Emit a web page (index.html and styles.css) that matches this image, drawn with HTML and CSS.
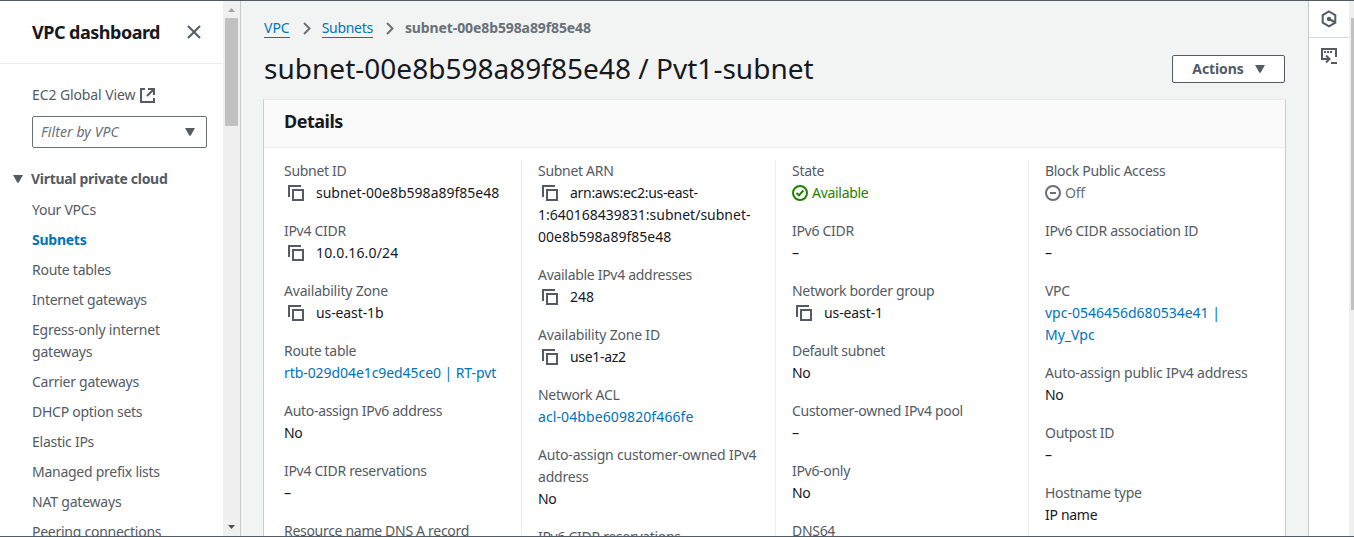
FILE: index.html
```html
<!DOCTYPE html>
<html lang="en">
<head>
<meta charset="utf-8">
<title>Subnet details | VPC</title>
<link rel="stylesheet" href="styles.css">
</head>
<body>
<svg class="defs" width="0" height="0">
  <symbol id="copy" viewBox="0 0 16 16"><path d="M1 12V1h12M5 5h10v10H5z" fill="none" stroke="currentColor" stroke-width="2"/></symbol>
  <symbol id="down" viewBox="0 0 10 8"><path d="M0 0h10L5.9 7.3a1 1 0 0 1-1.8 0z" fill="currentColor"/></symbol>
  <symbol id="chev" viewBox="0 0 8 13"><path d="M1 1l5.5 5.5L1 12" fill="none" stroke="#687078" stroke-width="2"/></symbol>
</svg>
<div class="app">
  <nav class="side">
    <div class="side-head"><h2>VPC dashboard</h2>
      <svg width="14" height="14" viewBox="0 0 14 14"><path d="M1 1l12 12M13 1L1 13" fill="none" stroke="#545b64" stroke-width="2"/></svg>
    </div>
    <a class="global"><span>EC2 Global View</span>
      <svg width="15" height="15" viewBox="0 0 15 15"><path d="M5 1H1v13h13v-4M8 1h6v6M13.500 1.500L7 8" fill="none" stroke="#545b64" stroke-width="2"/></svg>
    </a>
    <div class="select"><i>Filter by VPC</i><svg width="10" height="8"><use href="#down"/></svg></div>
    <div class="section"><svg width="10" height="8"><use href="#down"/></svg><b>Virtual private cloud</b></div>
    <ul class="links">
      <li>Your VPCs</li>
      <li class="active">Subnets</li>
      <li>Route tables</li>
      <li>Internet gateways</li>
      <li class="loose">Egress-only internet<br>gateways</li>
      <li>Carrier gateways</li>
      <li>DHCP option sets</li>
      <li>Elastic IPs</li>
      <li>Managed prefix lists</li>
      <li class="loose">NAT gateways</li>
      <li>Peering connections</li>
    </ul>
  </nav>
  <div class="scroll">
    <svg width="7" height="4" viewBox="0 0 7 4"><path d="M0 4L3.5 0 7 4z" fill="#a3a3a3"/></svg>
    <div class="thumb"></div>
    <svg class="end" width="7" height="4" viewBox="0 0 7 4"><path d="M0 0h7L3.5 4z" fill="#505050"/></svg>
  </div>
  <main class="main">
    <div class="crumbs">
      <a class="c1">VPC</a><svg width="8" height="13"><use href="#chev"/></svg>
      <a class="c2">Subnets</a><svg width="8" height="13"><use href="#chev"/></svg>
      <b>subnet-00e8b598a89f85e48</b>
    </div>
    <div class="title"><h1>subnet-00e8b598a89f85e48 / Pvt1-subnet</h1>
      <button class="btn"><span>Actions</span><svg width="10" height="8"><use href="#down"/></svg></button>
    </div>
    <section class="card">
      <header><h2>Details</h2></header>
      <div class="grid">
        <dl>
          <dt>Subnet ID</dt><dd class="id"><svg class="copy"><use href="#copy"/></svg>subnet-00e8b598a89f85e48</dd>
          <dt>IPv4 CIDR</dt><dd class="cidr"><svg class="copy"><use href="#copy"/></svg>10.0.16.0/24</dd>
          <dt class="loose">Availability Zone</dt><dd class="zone"><svg class="copy"><use href="#copy"/></svg>us-east-1b</dd>
          <dt>Route table</dt><dd class="route link">rtb-029d04e1c9ed45ce0 | RT-pvt</dd>
          <dt>Auto-assign IPv6 address</dt><dd>No</dd>
          <dt>IPv4 CIDR reservations</dt><dd>–</dd>
          <dt>Resource name DNS A record</dt><dd>Disabled</dd>
        </dl>
        <dl>
          <dt>Subnet ARN</dt><dd><svg class="copy"><use href="#copy"/></svg>arn:aws:ec2:us-east-<br><span class="id">1:640168439831:subnet/subnet-<br>00e8b598a89f85e48</span></dd>
          <dt>Available IPv4 addresses</dt><dd class="id"><svg class="copy"><use href="#copy"/></svg>248</dd>
          <dt class="loose">Availability Zone ID</dt><dd><svg class="copy"><use href="#copy"/></svg>use1-az2</dd>
          <dt>Network ACL</dt><dd class="acl link">acl-04bbe609820f466fe</dd>
          <dt class="loose">Auto-assign customer-owned IPv4<br>address</dt><dd>No</dd>
          <dt>IPv6 CIDR reservations</dt><dd>–</dd>
        </dl>
        <dl>
          <dt>State</dt><dd class="status ok"><svg width="16" height="16" viewBox="0 0 16 16"><g fill="none" stroke="currentColor" stroke-width="2"><circle cx="8" cy="8" r="7"/><path d="M4.5 8l2.5 2.3L11.3 5.5"/></g></svg>Available</dd>
          <dt>IPv6 CIDR</dt><dd>–</dd>
          <dt>Network border group</dt><dd class="zone"><svg class="copy"><use href="#copy"/></svg>us-east-1</dd>
          <dt>Default subnet</dt><dd>No</dd>
          <dt>Customer-owned IPv4 pool</dt><dd>–</dd>
          <dt>IPv6-only</dt><dd>No</dd>
          <dt>DNS64</dt><dd>Disabled</dd>
        </dl>
        <dl>
          <dt>Block Public Access</dt><dd class="status off"><svg width="16" height="16" viewBox="0 0 16 16"><g fill="none" stroke="currentColor" stroke-width="2"><circle cx="8" cy="8" r="7"/><path d="M5 8h6"/></g></svg>Off</dd>
          <dt>IPv6 CIDR association ID</dt><dd>–</dd>
          <dt>VPC</dt><dd class="id link">vpc-0546456d680534e41 |<br>My_Vpc</dd>
          <dt class="loose">Auto-assign public IPv4 address</dt><dd>No</dd>
          <dt>Outpost ID</dt><dd>–</dd>
          <dt>Hostname type</dt><dd>IP name</dd>
        </dl>
      </div>
    </section>
  </main>
  <aside class="rail">
    <div class="tool"><svg width="16" height="18" viewBox="0 0 16 18"><g fill="none" stroke="#545b64" stroke-width="2"><path d="M8 1.500l6.300 3.600v7.600L8 16.300l-6.300-3.600V5.100z"/><path d="M8 9l5.500 3"/></g><circle cx="8" cy="9" r="2.200" fill="#545b64"/></svg></div>
    <div class="tool"><svg width="16" height="16" viewBox="0 0 16 16"><g fill="none" stroke="#545b64" stroke-width="2"><path d="M15 9V1H1v10h7M5 7.500l3.500 3.500L5 14.500M10 15h6"/><path d="M3 4h8.500" stroke-dasharray="2 1"/></g></svg></div>
  </aside>
  <div class="page-scroll"><div class="thumb"></div></div>
</div>
</body>
</html>
```
FILE: styles.css
```css
* { box-sizing: border-box; margin: 0; padding: 0; }
body { font: 14px/22px "Noto Sans", sans-serif; letter-spacing: -0.3px; color: #545b64; background: #f2f3f3; overflow: hidden; }
svg { display: block; flex: none; }
.defs { position: absolute; }
.app { display: flex; height: 537px; border-top: 1px solid #545b64; border-bottom: 1px solid #545b64; overflow: hidden; }
h2 { font-size: 18px; line-height: 22px; letter-spacing: -0.5px; color: #16191f; }
.side { width: 223px; flex: none; background: #fff; overflow: hidden; }
.side-head { display: flex; align-items: center; justify-content: space-between; height: 63px; padding: 0 22px 0 32px; border-bottom: 1px solid #eaeded; }
.global { display: flex; align-items: center; gap: 5px; margin: 20px 0 0 32px; letter-spacing: -0.1px; }
.select { display: flex; align-items: center; justify-content: space-between; width: 175px; height: 32px; margin: 10px 0 0 32px; padding: 0 11px 0 8px; border: 1px solid #687078; border-radius: 2px; }
.select i { color: #687078; letter-spacing: 0.1px; }
.select svg, .section svg { color: #545b64; }
.section { display: flex; align-items: center; gap: 8px; margin: 20px 0 9px 13px; }
.links { list-style: none; padding-left: 32px; }
.links li { margin-bottom: 8px; white-space: nowrap; letter-spacing: -0.26px; }
.links .active { color: #0073bb; font-weight: 700; }
.links .loose, .loose { letter-spacing: -0.2px; }
.scroll { display: flex; flex-direction: column; align-items: center; width: 17px; flex: none; background: #f0f0f0; padding-top: 7px; }
.scroll .thumb { width: 13px; height: 108px; margin-top: 6px; background: #c1c1c1; }
.scroll .end { margin: auto 0 7px; }
.main { flex: 1; min-width: 0; border-left: 1px solid #c5cbcb; padding: 16px 22px 0 23px; overflow: hidden; }
.crumbs { display: flex; align-items: center; height: 22px; }
.crumbs a { color: #0073bb; line-height: 19px; border-bottom: 1px solid #0073bb; }
.crumbs .c1 { letter-spacing: 0; }
.crumbs svg { margin: 0 11px 0 13px; }
.crumbs b { color: #687078; letter-spacing: -0.1px; }
.title { display: flex; align-items: center; justify-content: space-between; height: 36px; margin-top: 11px; padding-right: 1px; }
h1 { font-size: 28px; font-weight: 400; line-height: 36px; letter-spacing: 0.02px; color: #16191f; white-space: nowrap; }
.btn { display: flex; align-items: center; justify-content: center; gap: 11px; width: 113px; height: 28px; margin-top: 1px; background: #fff; border: 1px solid #545b64; border-radius: 2px; font: 700 14px "Noto Sans", sans-serif; letter-spacing: -0.1px; color: #545b64; }
.card { margin-top: 13px; height: 500px; background: #fff; border: 1px solid #c9cece; border-top-color: #e8ebeb; margin-left: -1px; }
.card header { display: flex; align-items: center; height: 48px; padding: 0 0 5px 20px; background: #fafafa; border-bottom: 1px solid #eaeded; }
.grid { display: grid; grid-template-columns: 257px 254px 253px 256px; margin-top: 12px; }
dl { height: 400px; padding-left: 16px; border-left: 1px solid #eaeded; white-space: nowrap; }
dl:first-child { padding-left: 20px; border-left: 0; }
dd { color: #16191f; margin-bottom: 16px; }
.id { letter-spacing: 0; }
.cidr { letter-spacing: 0.15px; }
.route { letter-spacing: -0.07px; }
.zone { letter-spacing: -0.1px; }
.acl { letter-spacing: 0.1px; }
.link { color: #0073bb; }
.copy { display: inline-block; width: 16px; height: 16px; margin: 0 12px 0 4px; vertical-align: -3px; color: #545b64; }
.status { display: flex; align-items: center; gap: 4px; }
.ok { color: #1d8102; }
.off { color: #687078; }
.rail { width: 41px; flex: none; background: #fff; border-left: 1px solid #c5cbcb; }
.tool { display: flex; align-items: center; justify-content: center; height: 37px; }
.tool:first-child { border-bottom: 1px solid #d5dbdb; }
.tool + .tool { height: 36px; }
.page-scroll { width: 5px; flex: none; background: #f0f0f0; padding: 17px 0 0 2px; }
.page-scroll .thumb { height: 292px; background: #c1c1c1; }
```
